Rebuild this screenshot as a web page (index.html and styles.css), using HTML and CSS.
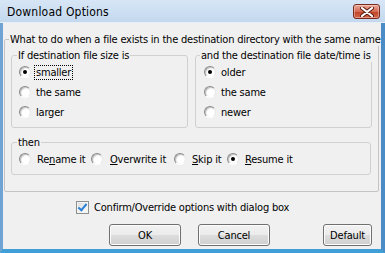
FILE: index.html
```html
<!DOCTYPE html>
<html lang="en">
<head>
    <meta charset="UTF-8">
    <meta name="viewport" content="width=device-width, initial-scale=1.0">
    <title>Download Options</title>
    <link rel="stylesheet" href="styles.css">
</head>
<body>
    <div class="window">
        <div class="titlebar">
            <span class="title">Download Options</span>
            <button class="close-btn" title="Close">
                <svg width="14" height="10" viewBox="0 0 14 10">
                    <path d="M2 1 L12 9 M12 1 L2 9" stroke="#5a1a10" stroke-width="4" stroke-linecap="round"/>
                    <path d="M2 1 L12 9 M12 1 L2 9" stroke="#ffffff" stroke-width="2.2" stroke-linecap="round"/>
                </svg>
            </button>
        </div>

        <div class="dialog">
            <fieldset class="group outer">
                <legend>What to do when a file exists in the destination directory with the same name</legend>

                <div class="pair">
                    <fieldset class="group">
                        <legend>If destination file size is</legend>
                        <label class="option"><input type="radio" name="size" checked><span class="focus">smaller</span></label>
                        <label class="option"><input type="radio" name="size"><span>the same</span></label>
                        <label class="option"><input type="radio" name="size"><span>larger</span></label>
                    </fieldset>
                    <fieldset class="group">
                        <legend>and the destination file date/time is</legend>
                        <label class="option"><input type="radio" name="date" checked><span>older</span></label>
                        <label class="option"><input type="radio" name="date"><span>the same</span></label>
                        <label class="option"><input type="radio" name="date"><span>newer</span></label>
                    </fieldset>
                </div>

                <fieldset class="group then">
                    <legend>then</legend>
                    <div class="inline-options">
                        <label class="option rename"><input type="radio" name="action"><span>Re<u>n</u>ame it</span></label>
                        <label class="option overwrite"><input type="radio" name="action"><span><u>O</u>verwrite it</span></label>
                        <label class="option skip"><input type="radio" name="action"><span><u>S</u>kip it</span></label>
                        <label class="option resume"><input type="radio" name="action" checked><span><u>R</u>esume it</span></label>
                    </div>
                </fieldset>
            </fieldset>

            <label class="confirm">
                <input type="checkbox" checked>
                <span>Confirm/Override options with dialog box</span>
            </label>

            <div class="buttons">
                <button class="btn ok">OK</button>
                <button class="btn cancel">Cancel</button>
                <button class="btn default">Default</button>
            </div>
        </div>
    </div>
</body>
</html>
```

FILE: styles.css
```css
* {
    margin: 0;
    padding: 0;
    box-sizing: border-box;
}

body {
    font-family: "DejaVu Sans Condensed", "Liberation Sans", sans-serif;
    font-size: 11px;
    letter-spacing: -0.2px;
    color: #000;
    background: #f0f0f0;
}

.window {
    width: 385px;
    height: 253px;
    display: flex;
    flex-direction: column;
    background: #f0f0f0;
    border-left: 3px solid #6fa3d4;
    border-right: 4px solid #4c8cc6;
    border-bottom: 4px solid #3f9fd6;
}

/* title bar */
.titlebar {
    height: 23px;
    flex-shrink: 0;
    display: flex;
    align-items: center;
    justify-content: space-between;
    margin-left: -3px;
    margin-right: -4px;
    padding-left: 7px;
    padding-right: 5px;
    background: linear-gradient(#d7e6f6, #c3d8ee);
    border-bottom: 1px solid #e6eef8;
}

.title {
    font-size: 12px;
    letter-spacing: 0.2px;
    color: #000;
    padding-top: 1px;
}

.close-btn {
    width: 27px;
    height: 15px;
    margin-top: 1px;
    border: 1px solid #7a2a1c;
    border-radius: 3px;
    background: linear-gradient(#eaa898, #d46a52 50%, #c04127 51%, #d2664a);
    display: flex;
    align-items: center;
    justify-content: center;
    box-shadow: inset 0 0 0 1px rgba(255,255,255,0.35);
}

/* dialog body */
.dialog {
    flex: 1;
    display: flex;
    flex-direction: column;
    padding: 10px 2px 0 1px;
}

.group {
    border: 1px solid #d0d0d0;
    border-radius: 3px;
    padding: 0 0 5px 7px;
    min-width: 0;
}

.group legend {
    line-height: 13px;
    padding: 0 1px;
    margin-left: -2px;
    white-space: nowrap;
}

.outer {
    border-color: #c4c4c4;
    border-radius: 2px;
    padding: 3px 7px 16px 6px;
}

.pair {
    display: flex;
    gap: 7px;
}

.pair .group {
    width: 177px;
    flex-shrink: 0;
}

.pair .group + .group {
    padding-left: 8px;
}

.pair .group + .group legend {
    margin-left: -4px;
}

.then {
    margin-top: 8px;
}

.option {
    display: flex;
    align-items: center;
    height: 20px;
    gap: 5px;
}

.inline-options {
    display: flex;
}

.inline-options .option {
    gap: 6px;
}

.rename {
    width: 72px;
}

.overwrite {
    width: 83px;
}

.overwrite input {
    margin-right: 1px;
}

.skip {
    width: 53px;
}

.focus {
    outline: 1px dotted #000;
    padding: 0 1px;
    margin-left: -1px;
    line-height: 13px;
}

/* radio buttons */
input[type="radio"] {
    appearance: none;
    -webkit-appearance: none;
    width: 12px;
    height: 12px;
    border-radius: 50%;
    border: 1px solid;
    border-color: #8a8a8a #e8e8e8 #ffffff #8a8a8a;
    background: radial-gradient(circle at 60% 60%, #ffffff 40%, #e4e4e4 100%);
    box-shadow: inset 1px 1px 1px #c0c0c0;
    position: relative;
    flex-shrink: 0;
}

input[type="radio"]:checked::after {
    content: "";
    position: absolute;
    left: 3px;
    top: 3px;
    width: 4px;
    height: 4px;
    border-radius: 50%;
    background: #000;
}

/* checkbox row */
.confirm {
    display: flex;
    align-items: center;
    gap: 5px;
    height: 16px;
    margin-top: 7px;
    padding-left: 72px;
}

input[type="checkbox"] {
    appearance: none;
    -webkit-appearance: none;
    width: 13px;
    height: 13px;
    border: 1px solid #8e8f8f;
    background: linear-gradient(135deg, #dcdcdc, #ffffff);
    box-shadow: inset 0 0 0 1px #f4f4f4;
    position: relative;
    flex-shrink: 0;
}

input[type="checkbox"]:checked::after {
    content: "";
    position: absolute;
    left: 3px;
    top: 0;
    width: 3px;
    height: 7px;
    border: solid #2a7fd8;
    border-width: 0 2px 2px 0;
    transform: rotate(40deg);
}

/* buttons */
.buttons {
    display: flex;
    margin-top: 9px;
    padding-left: 105px;
    padding-right: 7px;
}

.btn {
    height: 22px;
    font-family: inherit;
    font-size: 11px;
    letter-spacing: inherit;
    color: #000;
    border: 1px solid #707070;
    border-radius: 3px;
    background: linear-gradient(#f2f2f2 0%, #ebebeb 50%, #dddddd 51%, #cfcfcf 100%);
    box-shadow: inset 0 0 0 1px #fcfcfc;
}

.ok {
    width: 72px;
}

.cancel {
    width: 72px;
    margin-left: 17px;
}

.default {
    width: 49px;
    margin-left: auto;
}
```
